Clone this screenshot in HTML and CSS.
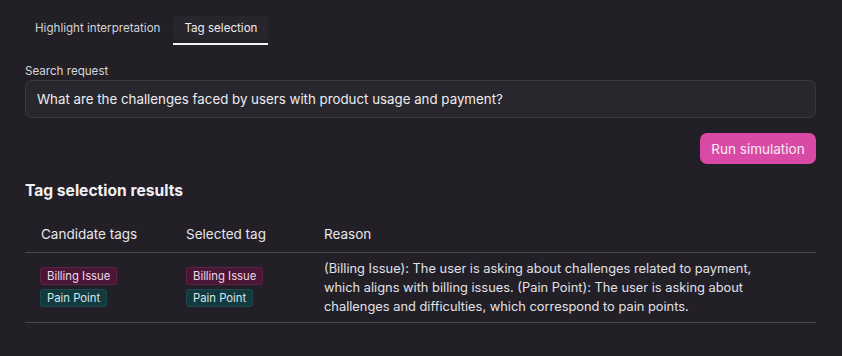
FILE: index.html
```html
<!DOCTYPE html>
<html>
<head>
<meta charset="utf-8">
<link rel="stylesheet" href="styles.css">
</head>
<body>
<div class="page">
  <div class="tabs">
    <div class="tab">Highlight interpretation</div>
    <div class="tab active">Tag selection</div>
  </div>
  <div class="field">
    <label class="label">Search request</label>
    <div class="input">What are the challenges faced by users with product usage and payment?</div>
  </div>
  <div class="actions">
    <button class="btn">Run simulation</button>
  </div>
  <h2 class="heading">Tag selection results</h2>
  <table class="results">
    <thead>
      <tr>
        <th class="c1">Candidate tags</th>
        <th class="c2">Selected tag</th>
        <th class="c3">Reason</th>
      </tr>
    </thead>
    <tbody>
      <tr>
        <td class="c1">
          <div class="tags cand"><span class="tag billing">Billing Issue</span><span class="tag pain">Pain Point</span></div>
        </td>
        <td class="c2">
          <div class="tags"><span class="tag billing">Billing Issue</span><span class="tag pain">Pain Point</span></div>
        </td>
        <td class="c3 reason">(Billing Issue): The user is asking about challenges related to payment, which aligns with billing issues. (Pain Point): The user is asking about challenges and difficulties, which correspond to pain points.</td>
      </tr>
    </tbody>
  </table>
</div>
</body>
</html>
```
FILE: styles.css
```css
* { box-sizing: border-box; }
html, body { margin: 0; padding: 0; background: #222026; }
body {
  font-family: Inter, "Noto Sans", sans-serif;
  color: #e6e4ea;
  -webkit-font-smoothing: antialiased;
}
.page { padding: 16px 26px 0 25px; }
.tabs { display: flex; gap: 4px; padding-left: 1px; }
.tab {
  font-size: 11.6px;
  color: #d4d2d8;
  padding: 4px 9px;
  height: 24px;
  line-height: 16px;
  border-radius: 4px;
}
.tab.active {
  background: #28262d;
  color: #ecebef;
  position: relative;
  padding: 4px 11px;
}
.tab.active::after {
  content: "";
  position: absolute;
  left: 0; right: 0; bottom: -5px;
  height: 2px;
  background: #f2f1f4;
}
.field { margin-top: 23px; }
.label { display: block; font-size: 11.6px; color: #d8d6dc; line-height: 16px; }
.input {
  margin-top: 1px;
  height: 38px;
  border: 1px solid #3a3840;
  background: #29272e;
  border-radius: 7px;
  font-size: 13.3px;
  color: #eeedf1;
  line-height: 36px;
  padding-left: 11px;
}
.actions { display: flex; justify-content: flex-end; margin-top: 15px; }
.btn {
  font-family: Inter, "Noto Sans", sans-serif;
  background: #d94aa6;
  color: #fbeaf5;
  border: none;
  border-radius: 7px;
  font-size: 13.5px;
  height: 31px;
  width: 116px;
  padding: 0;
}
.heading {
  font-size: 15.6px;
  font-weight: 700;
  margin: 17px 0 0 0;
  color: #f1f0f3;
  line-height: 20px;
}
.results {
  width: 100%;
  border-collapse: collapse;
  margin-top: 17px;
  font-size: 13.5px;
}
.results th {
  text-align: left;
  font-weight: 400;
  color: #e8e6eb;
  height: 34px;
  padding: 0 0 1px 0;
  border-bottom: 1px solid #4a484f;
}
.results td {
  vertical-align: top;
  padding: 14px 0 0 0;
  border-bottom: 1px solid #4a484f;
}
.c1 { width: 161px; padding-left: 16px !important; }
.c2 { width: 138px; }
.tags { display: flex; flex-direction: column; align-items: flex-start; gap: 4px; }
.tags.cand { margin-left: -1px; }
.tag {
  font-size: 11.3px;
  line-height: 16px;
  padding: 0 6px;
  border-radius: 3px;
  border: 1px solid;
}
.tag.billing { background: #4a1636; border-color: #5f2148; color: #f0d8e6; }
.tag.pain { background: #133a3f; border-color: #1a484e; color: #d6e8ea; }
.reason {
  color: #e2e0e6;
  line-height: 19px;
  padding: 6px 30px 6px 0 !important;
  font-size: 12.85px;
}
```
